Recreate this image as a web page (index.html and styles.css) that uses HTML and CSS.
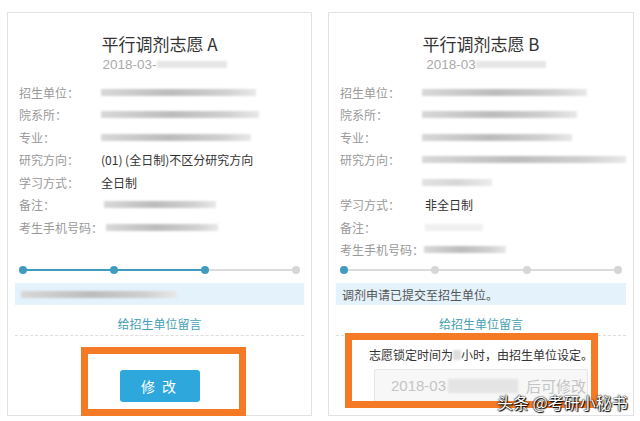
FILE: index.html
```html
<!DOCTYPE html>
<html lang="zh-CN">
<head>
    <meta charset="UTF-8">
    <title>平行调剂志愿</title>
    <link rel="stylesheet" href="styles.css">
</head>
<body>
    <div class="page">
        <div class="card">
            <h2 class="title">平行调剂志愿 A</h2>
            <div class="date">2018-03-<span class="blur blur-date"></span></div>
            <div class="details">
                <div class="row"><span class="label">招生单位：</span><span class="blur" style="width:155px"></span></div>
                <div class="row"><span class="label">院系所：</span><span class="blur" style="width:158px"></span></div>
                <div class="row"><span class="label">专业：</span><span class="blur" style="width:150px"></span></div>
                <div class="row"><span class="label">研究方向：</span><span class="value">(01) (全日制)不区分研究方向</span></div>
                <div class="row"><span class="label">学习方式：</span><span class="value">全日制</span></div>
                <div class="row"><span class="label">备注：</span><span class="blur indent" style="width:112px"></span></div>
                <div class="row"><span class="label">考生手机号码：</span><span class="blur indent" style="width:112px"></span></div>
            </div>
            <div class="progress">
                <div class="track"><div class="fill" style="width:66.7%"></div></div>
                <span class="dot on"></span>
                <span class="dot on"></span>
                <span class="dot on"></span>
                <span class="dot"></span>
            </div>
            <div class="notice"><span class="blur" style="width:156px"></span></div>
            <div class="message"><a href="#">给招生单位留言</a></div>
            <div class="actions">
                <button class="btn">修 改</button>
            </div>
            <div class="mark mark-a"></div>
        </div>

        <div class="card">
            <h2 class="title">平行调剂志愿 B</h2>
            <div class="date">2018-03<span class="blur blur-date"></span></div>
            <div class="details">
                <div class="row"><span class="label">招生单位：</span><span class="blur" style="width:165px"></span></div>
                <div class="row"><span class="label">院系所：</span><span class="blur" style="width:155px"></span></div>
                <div class="row"><span class="label">专业：</span><span class="blur" style="width:150px"></span></div>
                <div class="row"><span class="label">研究方向：</span><span class="blur" style="width:204px"></span></div>
                <div class="row"><span class="label"></span><span class="blur light" style="width:70px"></span></div>
                <div class="row"><span class="label">学习方式：</span><span class="value indent">非全日制</span></div>
                <div class="row"><span class="label">备注：</span><span class="blur faint indent" style="width:58px"></span></div>
                <div class="row"><span class="label">考生手机号码：</span><span class="blur" style="width:82px"></span></div>
            </div>
            <div class="progress">
                <div class="track"></div>
                <span class="dot on"></span>
                <span class="dot"></span>
                <span class="dot"></span>
                <span class="dot"></span>
            </div>
            <div class="notice">调剂申请已提交至招生单位。</div>
            <div class="message"><a href="#">给招生单位留言</a></div>
            <div class="lock">
                <p class="lock-text">志愿锁定时间为<span class="blur tiny"></span>小时，由招生单位设定。</p>
                <div class="lock-box">2018-03<span class="blur blur-box"></span>后可修改</div>
            </div>
            <div class="mark mark-b"></div>
        </div>
    </div>
    <div class="watermark">头条 @考研小秘书</div>
</body>
</html>
```

FILE: styles.css
```css
body {
    margin: 0;
    background-color: #fff;
    font-family: "Noto Sans CJK SC", "Liberation Sans", sans-serif;
    color: #333;
}
.page {
    display: flex;
    gap: 16px;
    padding: 12px 6px 0 7px;
}
.card {
    position: relative;
    width: 290px;
    height: 402px;
    border: 1px solid #e2e2e2;
    padding: 0 7px;
}
.title {
    margin: 20px 0 0;
    text-align: center;
    font-size: 17px;
    font-weight: normal;
    line-height: 22px;
    color: #333;
}
.date {
    display: flex;
    justify-content: center;
    align-items: center;
    height: 18px;
    padding-left: 10px;
    font-family: "Liberation Sans", sans-serif;
    font-size: 13.5px;
    color: #aaa;
}
.blur {
    display: inline-block;
    height: 7px;
    background: linear-gradient(to right, #d8d8d8, #bcbcbc 45%, #d0d0d0 80%, #e8e8e8);
    filter: blur(1.2px);
}
.blur.light {
    background: linear-gradient(to right, #e2e2e2, #d6d6d6, #ececec);
}
.blur.faint {
    background: #f0f0f0;
}
.blur-date {
    width: 70px;
    background: #e6e6e6;
}
.details {
    margin-top: 8px;
    height: 180px;
}
.row {
    display: flex;
    align-items: center;
    height: 22.5px;
    padding-left: 4px;
    font-size: 12px;
    white-space: nowrap;
}
.label {
    min-width: 82px;
    flex: none;
    color: #999;
}
.value {
    color: #333;
}
.indent {
    margin-left: 3px;
}
.progress {
    position: relative;
    display: flex;
    justify-content: space-between;
    align-items: center;
    height: 18px;
    margin: 0 4px;
}
.track {
    position: absolute;
    left: 4px;
    right: 4px;
    top: 8px;
    height: 2px;
    background-color: #dcdcdc;
}
.fill {
    height: 100%;
    background-color: #3f9cbf;
}
.dot {
    position: relative;
    width: 8px;
    height: 8px;
    border-radius: 50%;
    background-color: #d6d6d6;
}
.dot.on {
    background-color: #3f9cbf;
}
.notice {
    display: flex;
    align-items: center;
    height: 22px;
    margin-top: 4px;
    padding: 0 6px;
    background-color: #e4f2fb;
    font-size: 12px;
    color: #555;
}
.message {
    margin-top: 8px;
    line-height: 22px;
    text-align: center;
    font-size: 12px;
    border-bottom: 1px dashed #dedede;
}
.message a {
    color: #45a0b4;
    text-decoration: none;
}
.actions {
    display: flex;
    justify-content: center;
    padding-top: 34px;
}
.btn {
    width: 80px;
    height: 32px;
    border: none;
    border-radius: 3px;
    background-color: #2ea8dc;
    color: #fff;
    font-family: inherit;
    font-size: 14px;
    letter-spacing: 2px;
}
.lock {
    display: flex;
    flex-direction: column;
    align-items: center;
    padding-top: 8px;
}
.lock-text {
    margin: 0;
    line-height: 22px;
    font-size: 12px;
    color: #333;
}
.blur.tiny {
    width: 8px;
    height: 10px;
    background: #ddd;
}
.lock-box {
    display: flex;
    align-items: center;
    width: 196px;
    height: 31px;
    margin-top: 3px;
    padding-left: 16px;
    border: 1px solid #e6e6e6;
    border-radius: 2px;
    background-color: #f7f7f7;
    font-family: "Liberation Sans", "Noto Sans CJK SC", sans-serif;
    font-size: 15px;
    color: #c4c4c4;
}
.blur-box {
    width: 70px;
    height: 14px;
    margin: 0 8px 0 2px;
    background: #e4e4e4;
}
.mark {
    position: absolute;
    border: 7px solid #f47a25;
}
.mark-a {
    left: 73px;
    top: 334px;
    width: 165px;
    height: 69px;
    box-sizing: border-box;
}
.mark-b {
    left: 16px;
    top: 320px;
    width: 253px;
    height: 75px;
    box-sizing: border-box;
}
.watermark {
    position: absolute;
    left: 497px;
    top: 390px;
    font-size: 16px;
    color: #fff;
    text-shadow: 0 0 2px #000, 0 0 1px #000, 1px 1px 1px #000;
}
```
